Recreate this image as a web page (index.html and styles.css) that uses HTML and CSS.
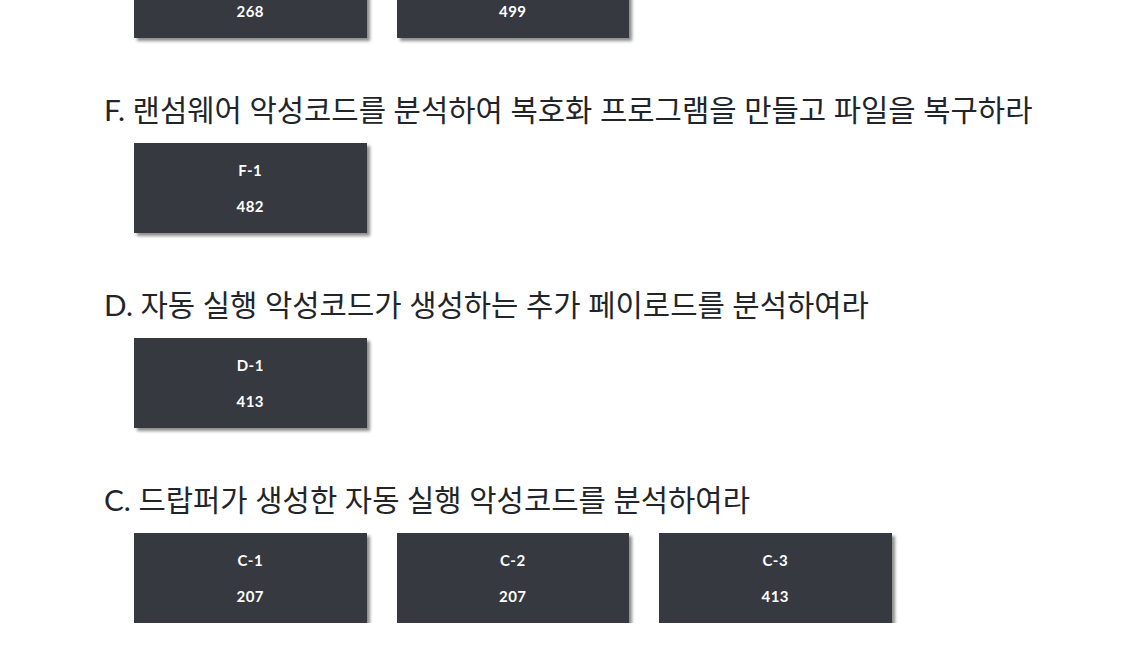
FILE: index.html
```html
<!DOCTYPE html>
<html lang="ko">
<head>
<meta charset="utf-8">
<title>Challenges</title>
<link rel="stylesheet" href="styles.css">
</head>
<body>
<main class="page">
  <section class="section section-first">
    <div class="cards">
      <div class="card"><span class="card-label">E-1</span><span class="card-value">268</span></div>
      <div class="card"><span class="card-label">E-2</span><span class="card-value">499</span></div>
    </div>
  </section>
  <section class="section">
    <h2 class="title">F. 랜섬웨어 악성코드를 분석하여 복호화 프로그램을 만들고 파일을 복구하라</h2>
    <div class="cards">
      <div class="card"><span class="card-label">F-1</span><span class="card-value">482</span></div>
    </div>
  </section>
  <section class="section">
    <h2 class="title">D. 자동 실행 악성코드가 생성하는 추가 페이로드를 분석하여라</h2>
    <div class="cards">
      <div class="card"><span class="card-label">D-1</span><span class="card-value">413</span></div>
    </div>
  </section>
  <section class="section">
    <h2 class="title">C. 드랍퍼가 생성한 자동 실행 악성코드를 분석하여라</h2>
    <div class="cards">
      <div class="card"><span class="card-label">C-1</span><span class="card-value">207</span></div>
      <div class="card"><span class="card-label">C-2</span><span class="card-value">207</span></div>
      <div class="card"><span class="card-label">C-3</span><span class="card-value">413</span></div>
    </div>
  </section>
</main>
</body>
</html>
```
FILE: styles.css
```css
html, body {
  margin: 0;
  padding: 0;
  background: #ffffff;
}
body {
  font-family: Lato, "Noto Sans CJK KR", sans-serif;
  color: #212529;
  overflow: hidden;
}
.page {
  padding-left: 104px;
}
.section {
  padding-top: 52px;
}
.section-first {
  margin-top: -104px;
}
.title {
  margin: 0 0 13px 0;
  font-size: 29.7px;
  font-weight: 400;
  line-height: 40px;
  color: #212529;
  white-space: nowrap;
}
.cards {
  display: flex;
  gap: 30px;
  padding-left: 30px;
}
.card {
  width: 232.5px;
  height: 90px;
  box-sizing: border-box;
  padding-top: 18px;
  background: #363940;
  box-shadow: 3px 3px 3px rgba(0, 0, 0, 0.45);
  display: flex;
  flex-direction: column;
  align-items: center;
  gap: 18px;
  color: #ffffff;
  font-weight: 700;
  font-size: 15px;
  letter-spacing: 0.5px;
}
.card-label, .card-value {
  line-height: 18px;
}
```
